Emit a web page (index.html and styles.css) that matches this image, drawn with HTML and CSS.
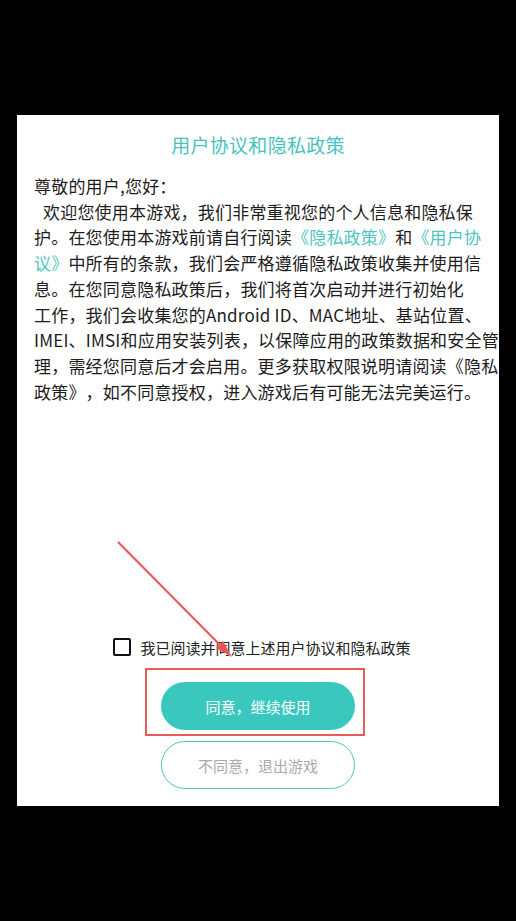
FILE: index.html
```html
<!DOCTYPE html>
<html lang="zh-CN">
<head>
<meta charset="utf-8">
<link rel="stylesheet" href="styles.css">
</head>
<body>
<div class="card">
  <h1 class="title">用户协议和隐私政策</h1>
  <div class="content">
    <p class="line">尊敬的用户,您好：</p>
    <p class="line indent">欢迎您使用本游戏，我们非常重视您的个人信息和隐私保</p>
    <p class="line">护。在您使用本游戏前请自行阅读<span class="link">《隐私政策》</span>和<span class="link">《用户协</span></p>
    <p class="line"><span class="link">议》</span>中所有的条款，我们会严格遵循隐私政策收集并使用信</p>
    <p class="line">息。在您同意隐私政策后，我们将首次启动并进行初始化</p>
    <p class="line">工作，我们会收集您的Android ID、MAC地址、基站位置、</p>
    <p class="line">IMEI、IMSI和应用安装列表，以保障应用的政策数据和安全管</p>
    <p class="line">理，需经您同意后才会启用。更多获取权限说明请阅读《隐私</p>
    <p class="line">政策》，如不同意授权，进入游戏后有可能无法完美运行。</p>
  </div>
  <div class="bottom">
    <label class="agree">
      <span class="box"></span>
      <span class="agree-text">我已阅读并同意上述用户协议和隐私政策</span>
    </label>
    <button class="btn btn-primary">同意，继续使用</button>
    <button class="btn btn-secondary">不同意，退出游戏</button>
  </div>
</div>
<svg class="annot" width="516" height="921" viewBox="0 0 516 921">
  <rect x="146" y="669" width="218" height="66" fill="none" stroke="#e65a5a" stroke-width="2"/>
  <line x1="118" y1="542" x2="224" y2="649" stroke="#ea5656" stroke-width="2"/>
  <polygon points="232,657 216,648 223,641" fill="#ea5656"/>
</svg>
</body>
</html>
```
FILE: styles.css
```css
html, body {
  margin: 0;
  padding: 0;
}
body {
  background: #000;
  width: 516px;
  height: 921px;
  position: relative;
  overflow: hidden;
  font-family: "Noto Sans CJK SC", "Noto Sans", sans-serif;
  padding-top: 115px;
  box-sizing: border-box;
  text-spacing-trim: space-all;
}
.card {
  margin: 0 17px;
  width: 482px;
  height: 691px;
  background: #fff;
  display: flex;
  flex-direction: column;
  box-sizing: border-box;
  padding: 15px 17px 17px;
}
.title {
  margin: 0;
  font-size: 19px;
  font-weight: 400;
  line-height: 30px;
  text-align: center;
  color: #47c3bf;
  letter-spacing: 0.3px;
}
.content {
  margin-top: 13px;
  color: #1c1c1c;
  font-size: 17px;
  letter-spacing: 0.2px;
}
.line {
  margin: 0;
  line-height: 25.7px;
  white-space: nowrap;
}
.indent {
  padding-left: 9px;
}
.link {
  color: #4fc4c0;
}
.bottom {
  margin-top: auto;
  display: flex;
  flex-direction: column;
  align-items: center;
}
.agree {
  display: flex;
  align-items: center;
  gap: 9px;
  height: 24px;
  margin-left: 8px;
}
.box {
  width: 18px;
  height: 18px;
  border: 2px solid #111;
  border-radius: 2px;
  box-sizing: border-box;
}
.agree-text {
  font-size: 15px;
  color: #222;
}
.btn {
  width: 194px;
  height: 48px;
  border-radius: 24px;
  font-family: inherit;
  font-size: 15px;
  box-sizing: border-box;
  padding: 0;
  margin-left: 0;
}
.btn-primary {
  margin-top: 23px;
  background: #3ac8be;
  border: none;
  color: #fff;
}
.btn-secondary {
  margin-top: 11px;
  background: #fff;
  border: 1.5px solid #4cc8c0;
  color: #aaaaaa;
}
.annot {
  position: absolute;
  left: 0;
  top: 0;
  pointer-events: none;
}
```
